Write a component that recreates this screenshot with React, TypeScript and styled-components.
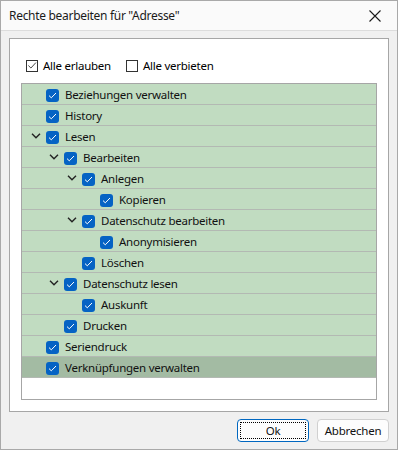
import React from "react";
import styled, { createGlobalStyle } from "styled-components";

const GlobalStyle = createGlobalStyle`
  html, body {
    margin: 0;
    padding: 0;
    background: #ffffff;
  }
  * {
    box-sizing: border-box;
  }
`;

type Node = {
  label: string;
  level: number;
  expandable?: boolean;
  selected?: boolean;
};

const nodes: Node[] = [
  { label: "Beziehungen verwalten", level: 0 },
  { label: "History", level: 0 },
  { label: "Lesen", level: 0, expandable: true },
  { label: "Bearbeiten", level: 1, expandable: true },
  { label: "Anlegen", level: 2, expandable: true },
  { label: "Kopieren", level: 3 },
  { label: "Datenschutz bearbeiten", level: 2, expandable: true },
  { label: "Anonymisieren", level: 3 },
  { label: "Löschen", level: 2 },
  { label: "Datenschutz lesen", level: 1, expandable: true },
  { label: "Auskunft", level: 2 },
  { label: "Drucken", level: 1 },
  { label: "Seriendruck", level: 0 },
  { label: "Verknüpfungen verwalten", level: 0, selected: true },
];

export default function App(): JSX.Element {
  return (
    <>
      <GlobalStyle />
      <Window>
        <TitleBar>
          <Title>Rechte bearbeiten für "Adresse"</Title>
          <CloseButton>
            <svg width="12" height="12" viewBox="0 0 12 12">
              <path d="M0.5 0.5 L11.5 11.5 M11.5 0.5 L0.5 11.5" stroke="#1a1a1a" strokeWidth="1.1" fill="none" />
            </svg>
          </CloseButton>
        </TitleBar>
        <Body>
          <Panel>
            <TopOptions>
              <Option>
                <PlainBox>
                  <svg width="11" height="11" viewBox="0 0 11 11">
                    <path d="M1.5 5.5 L4.3 8.3 L9.8 2.3" stroke="#333" strokeWidth="1" fill="none" />
                  </svg>
                </PlainBox>
                <span>Alle erlauben</span>
              </Option>
              <Option>
                <PlainBox />
                <span>Alle verbieten</span>
              </Option>
            </TopOptions>
            <Tree>
              {nodes.map((n, i) => (
                <Row key={i} $level={n.level} $selected={n.selected}>
                  <Expander>
                    {n.expandable && (
                      <svg width="10" height="6" viewBox="0 0 10 6">
                        <path d="M1 0.8 L5 4.8 L9 0.8" stroke="#222" strokeWidth="1.4" fill="none" />
                      </svg>
                    )}
                  </Expander>
                  <BlueBox>
                    <svg width="9" height="7" viewBox="0 0 9 7">
                      <path d="M1 3.6 L3.3 5.8 L8 1" stroke="#fff" strokeWidth="1" fill="none" />
                    </svg>
                  </BlueBox>
                  <Label>{n.label}</Label>
                </Row>
              ))}
            </Tree>
          </Panel>
          <Footer>
            <Button $primary>
              <FocusRing>Ok</FocusRing>
            </Button>
            <Button>Abbrechen</Button>
          </Footer>
        </Body>
      </Window>
    </>
  );
}

const Window = styled.div`
  width: 398px;
  height: 450px;
  border: 1px solid #a9a9a9;
  display: flex;
  flex-direction: column;
  background: #f0f0f0;
  font-family: "Noto Sans", "Open Sans", sans-serif;
  font-size: 11.5px;
  letter-spacing: -0.25px;
  color: #000;
`;

const TitleBar = styled.div`
  height: 30px;
  flex-shrink: 0;
  background: #fafafa;
  border-bottom: 1px solid #dcdcdc;
  display: flex;
  align-items: center;
  justify-content: space-between;
  padding: 0 16px 0 8px;
`;

const Title = styled.div`
  font-size: 12px;
  letter-spacing: -0.3px;
  color: #1a1a1a;
`;

const CloseButton = styled.div`
  display: flex;
  align-items: center;
  width: 12px;
  height: 12px;
`;

const Body = styled.div`
  flex: 1;
  display: flex;
  flex-direction: column;
  padding: 7px 8px 0 8px;
`;

const Panel = styled.div`
  height: 374px;
  background: #fff;
  border: 1px solid #a6a6a6;
  padding: 20px 11px 11px 11px;
  display: flex;
  flex-direction: column;
`;

const TopOptions = styled.div`
  display: flex;
  gap: 15px;
  padding-left: 5px;
  height: 24px;
`;

const Option = styled.div`
  display: flex;
  align-items: center;
  gap: 5px;
  height: 13px;
`;

const PlainBox = styled.div`
  width: 12px;
  height: 12px;
  border: 1px solid #333;
  display: flex;
  align-items: center;
  justify-content: center;
  background: #fff;
`;

const Tree = styled.div`
  flex: 1;
  border: 1px solid #a6a6a6;
  background: #fff;
  display: flex;
  flex-direction: column;
`;

const Row = styled.div<{ $level: number; $selected?: boolean }>`
  height: 21px;
  flex-shrink: 0;
  display: flex;
  align-items: center;
  padding-left: ${(p) => 6 + p.$level * 18}px;
  background: ${(p) => (p.$selected ? "#a3bba3" : "#c1dcc1")};
  border-bottom: 1px solid #b3b9b3;
`;

const Expander = styled.div`
  width: 18px;
  height: 20px;
  display: flex;
  align-items: center;
  padding-left: 3px;
`;

const BlueBox = styled.div`
  width: 13px;
  height: 13px;
  border-radius: 3px;
  background: #0563c4;
  display: flex;
  align-items: center;
  justify-content: center;
  margin-top: 2px;
`;

const Label = styled.span`
  margin-left: 6px;
  color: #111;
`;

const Footer = styled.div`
  display: flex;
  justify-content: flex-end;
  gap: 8px;
  padding-top: 7px;
`;

const Button = styled.div<{ $primary?: boolean }>`
  width: 72px;
  height: 23px;
  border-radius: 4px;
  border: 1px solid ${(p) => (p.$primary ? "#0067c0" : "#d0d0d0")};
  background: #fdfdfd;
  display: flex;
  align-items: center;
  justify-content: center;
  padding: 2px;
  color: #111;
`;

const FocusRing = styled.div`
  width: 100%;
  height: 100%;
  border: 1px dotted #000;
  display: flex;
  align-items: center;
  justify-content: center;
`;
